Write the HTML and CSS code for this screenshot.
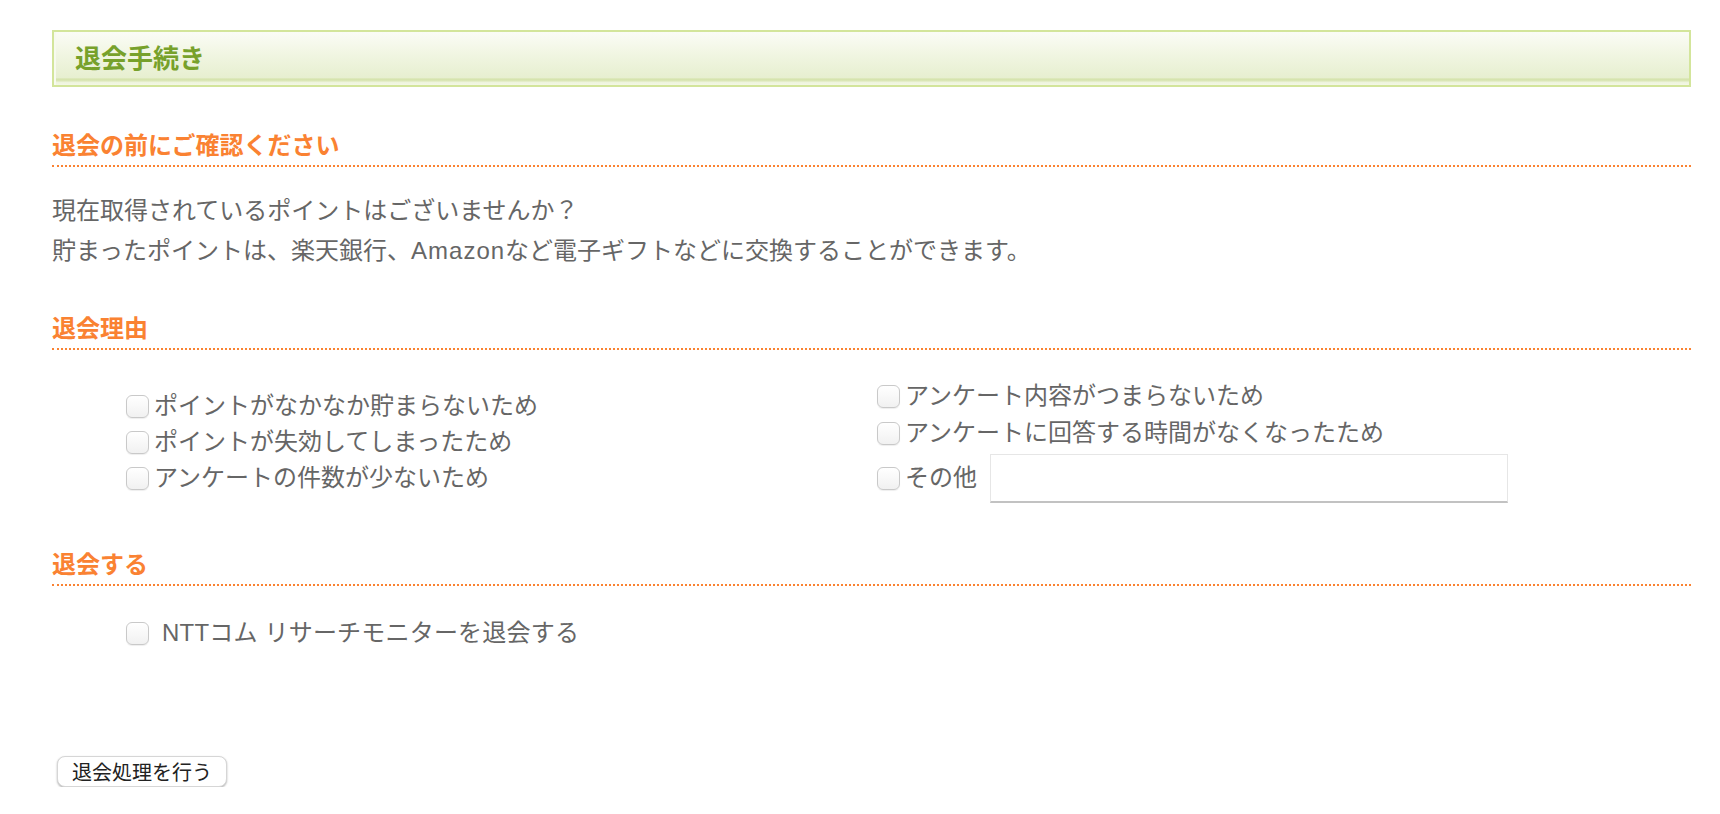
FILE: index.html
```html
<!DOCTYPE html>
<html lang="ja">
<head>
<meta charset="utf-8">
<title>退会手続き</title>
<link rel="stylesheet" href="styles.css">
</head>
<body>
<div class="page">
  <div class="title-box"><h1 class="title">退会手続き</h1></div>

  <h2 class="sec-head sec-first">退会の前にご確認ください</h2>
  <p class="notice">現在取得されているポイントはございませんか？<br>貯まったポイントは、楽天銀行、<span class="latin">Amazon</span>など電子ギフトなどに交換することができます。</p>

  <h2 class="sec-head sec-reason">退会理由</h2>
  <div class="reasons">
    <div class="reason-col reason-left">
      <label class="check-row"><input type="checkbox" class="cb">ポイントがなかなか貯まらないため</label>
      <label class="check-row"><input type="checkbox" class="cb">ポイントが失効してしまったため</label>
      <label class="check-row"><input type="checkbox" class="cb">アンケートの件数が少ないため</label>
    </div>
    <div class="reason-col reason-right">
      <label class="check-row"><input type="checkbox" class="cb">アンケート内容がつまらないため</label>
      <label class="check-row"><input type="checkbox" class="cb">アンケートに回答する時間がなくなったため</label>
      <div class="check-row other-row"><label class="other-label"><input type="checkbox" class="cb">その他</label><input type="text" class="other-input"></div>
    </div>
  </div>

  <h2 class="sec-head sec-quit">退会する</h2>
  <div class="quit">
    <label class="check-row quit-row"><input type="checkbox" class="cb"><span class="quit-text">NTTコム リサーチモニターを退会する</span></label>
  </div>

  <div class="actions"><button type="button" class="btn">退会処理を行う</button></div>
</div>
</body>
</html>
```

FILE: styles.css
```css
* { box-sizing: border-box; }

html, body {
  margin: 0;
  padding: 0;
  background: #ffffff;
}

body {
  font-family: "Liberation Sans", "Noto Sans CJK JP", sans-serif;
  color: #666666;
}

.page {
  width: 1691px;
  padding: 30px 0 0 52px;
}

.title-box {
  height: 57px;
  border: 2px solid #d3e59b;
  background: linear-gradient(to bottom, #fbfcf6 0%, #f1f6e3 40%, #e7efd0 86%, #d5e3ab 89%, #dbe7b8 92%, #eef4dd 95%, #f3f7e6 100%);
  box-shadow: inset 2px 0 0 #f7faef;
  display: flex;
  align-items: center;
  padding: 0 0 4px 21px;
}

.title {
  margin: 0;
  font-size: 26px;
  line-height: 30px;
  font-weight: bold;
  color: #77a12b;
  font-family: "Noto Sans CJK JP", sans-serif;
}

.sec-head {
  margin: 0;
  font-size: 24px;
  line-height: 30px;
  font-weight: bold;
  color: #fa8232;
  font-family: "Noto Sans CJK JP", sans-serif;
  padding-bottom: 6px;
  border-bottom: 2px dotted #fa8232;
}

.sec-first { margin-top: 42px; }
.sec-reason { margin-top: 41px; }
.sec-quit { margin-top: 44px; }

.notice {
  margin: 24px 0 0;
  font-size: 24px;
  line-height: 40px;
}

.latin {
  letter-spacing: 1px;
}

.reasons {
  margin-top: 28px;
  padding-left: 74px;
  display: grid;
  grid-template-columns: 751px 1fr;
  align-items: start;
}

.reason-col {
  display: flex;
  flex-direction: column;
}

.reason-left {
  padding-top: 10px;
}

.reason-right {
  gap: 1px;
}

.check-row {
  display: flex;
  align-items: center;
  height: 36px;
  font-size: 24px;
  line-height: 36px;
  color: #666666;
  white-space: nowrap;
}

.cb {
  -webkit-appearance: none;
  appearance: none;
  width: 23px;
  height: 23px;
  margin: 0 5px 0 0;
  border: 1px solid #c9c9c9;
  border-radius: 6px;
  background: linear-gradient(to bottom, #ffffff, #f1f1f1);
  box-shadow: 0 1px 1px rgba(0, 0, 0, 0.07);
  flex: none;
}

.other-row {
  height: 52px;
}

.other-label {
  display: flex;
  align-items: center;
}

.other-input {
  -webkit-appearance: none;
  appearance: none;
  margin-left: 13px;
  width: 518px;
  height: 49px;
  border: 1px solid #e6e6e6;
  border-bottom: 2px solid #c2c2c2;
  border-radius: 0;
  background: #ffffff;
  font-size: 18px;
  padding: 0 8px;
}

.quit {
  margin-top: 29px;
  padding-left: 74px;
}

.quit-text {
  margin-left: 8px;
  letter-spacing: 0.2px;
}

.actions {
  margin-top: 105px;
  padding-left: 5px;
}

.btn {
  width: 170px;
  height: 31px;
  padding: 0;
  font-family: "Noto Sans CJK JP", sans-serif;
  font-size: 20px;
  line-height: 29px;
  color: #222222;
  background: #ffffff;
  border: 1px solid #d6d6d6;
  border-radius: 8px;
  box-shadow: 0 1px 2px rgba(0, 0, 0, 0.3);
}
```
